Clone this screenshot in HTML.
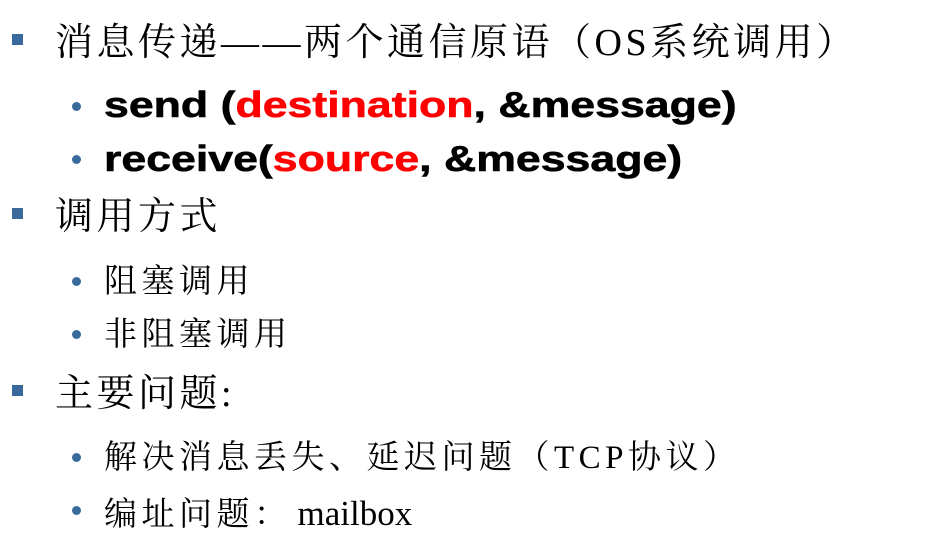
<!DOCTYPE html>
<html><head><meta charset="utf-8"><style>
body{margin:0;width:927px;height:547px;background:#fff;position:relative;overflow:hidden}
.l{position:absolute;white-space:nowrap;line-height:1}
.cj{font-family:"Liberation Serif","Noto Serif CJK SC",serif;color:#000}
.b1{font-size:38px;left:55px;letter-spacing:3.5px}
.b2{font-size:33px;left:104px;letter-spacing:4.5px}
.en{font-family:"Liberation Sans",sans-serif;font-weight:bold;font-size:36px;left:104px;color:#000;letter-spacing:0;transform:scaleX(1.24);transform-origin:0 0;-webkit-text-stroke:0.6px currentColor}
.r{color:#ff0000}
.sq{position:absolute;left:12px;width:11px;height:11px;background:#3a6a9c}
.dt{position:absolute;left:72px;width:9px;height:9px;border-radius:50%;background:#3a6a9c}
.m{letter-spacing:0;font-size:35px;margin-left:6px}
</style></head><body>
<div class="sq" style="top:34px"></div>
<div class="l cj b1" style="top:24px">消息传递——两个通信原语（OS系统调用）</div>
<div class="dt" style="top:102px"></div>
<div class="l en" style="top:87px">send (<span class="r">destination</span>, &amp;message)</div>
<div class="dt" style="top:155px"></div>
<div class="l en" style="top:141px">receive(<span class="r">source</span>, &amp;message)</div>
<div class="sq" style="top:208px"></div>
<div class="l cj b1" style="top:198px">调用方式</div>
<div class="dt" style="top:277px"></div>
<div class="l cj b2" style="top:266px">阻塞调用</div>
<div class="dt" style="top:330px"></div>
<div class="l cj b2" style="top:319px">非阻塞调用</div>
<div class="sq" style="top:385px"></div>
<div class="l cj b1" style="top:375px">主要问题:</div>
<div class="dt" style="top:453px"></div>
<div class="l cj b2" style="top:442px">解决消息丢失、延迟问题（TCP协议）</div>
<div class="dt" style="top:506px"></div>
<div class="l cj b2" style="top:496px">编址问题：<span class="m">mailbox</span></div>
</body></html>
